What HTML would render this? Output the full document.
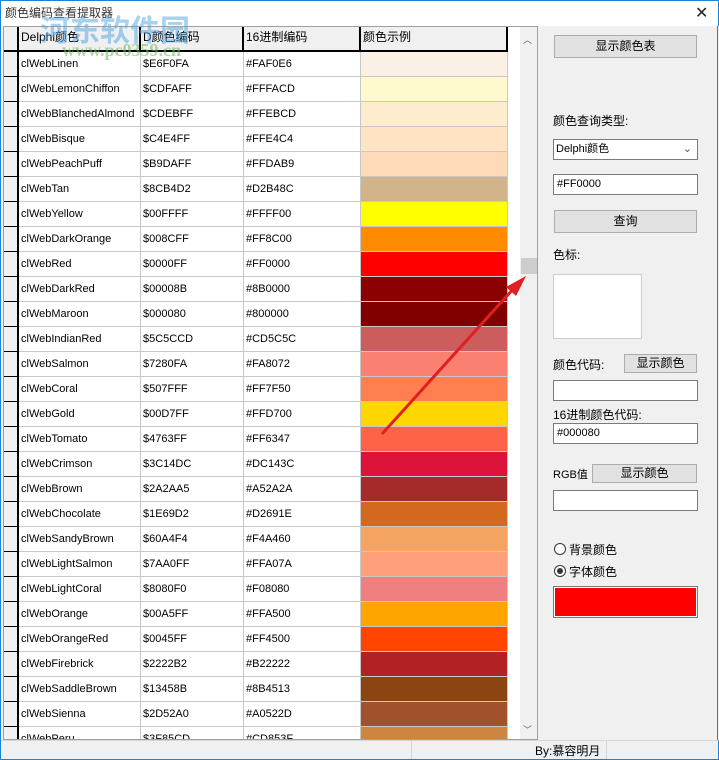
<!DOCTYPE html>
<html><head><meta charset="utf-8"><style>
*{margin:0;padding:0;box-sizing:border-box}
body{width:719px;height:760px;overflow:hidden;background:#f0f0f0;font-family:"Liberation Sans","Noto Sans CJK SC",sans-serif;font-size:11px;color:#000;position:relative}
.abs{position:absolute}
.title{left:0;top:0;width:719px;height:26px;background:#fff;border-top:1px solid #1883d7;border-left:1px solid #1883d7;border-right:1px solid #1883d7}
.grid{left:3px;top:26px;width:535px;height:714px;background:#fff;border:1px solid #a0a0a0;overflow:hidden}
.row{position:absolute;left:0;height:25px;width:504px}
.c{position:absolute;top:0;height:25px;line-height:24px;padding-left:2px;border-right:1px solid #c8c8c8;border-bottom:1px solid #c8c8c8;white-space:nowrap;overflow:hidden}
.ind{left:0;width:15px;background:#f0f0f0;border-right:2px solid #000;border-bottom:1px solid #000}
.hd .c{background:#f0f0f0;border-right:2px solid #000;border-bottom:2px solid #000;font-size:12px;line-height:20px}
.btn{position:absolute;background:#e1e1e1;border:1px solid #adadad;text-align:center;font-size:12px}
.inp{position:absolute;background:#fff;border:1px solid #7a7a7a;font-size:11px;padding-left:4px}
.lbl{position:absolute;font-size:12px}
</style></head><body>
<div class="abs title"></div>
<div class="abs" style="left:5px;top:4px;font-size:12px;color:#333">颜色编码查看提取器</div>
<div class="abs" style="left:695px;top:3px;font-size:16px;font-weight:300;color:#222">✕</div>
<div class="abs grid">
<div class="row hd" style="top:0;height:25px">
<div class="c" style="left:0;width:15px;height:25px"></div>
<div class="c" style="left:15px;width:122px;height:25px">Delphi颜色</div>
<div class="c" style="left:137px;width:103px;height:25px">D颜色编码</div>
<div class="c" style="left:240px;width:117px;height:25px">16进制编码</div>
<div class="c" style="left:357px;width:147px;height:25px">颜色示例</div>
</div>
<div id="rows"></div>
<div class="abs" style="left:516px;top:0;width:17px;height:714px;background:#f0f0f0"></div>
<div class="abs" style="left:519px;top:6px;font-size:9px;color:#606060">︿</div>
<div class="abs" style="left:519px;top:696px;font-size:9px;color:#606060">﹀</div>
<div class="abs" style="left:517px;top:231px;width:16px;height:16px;background:#cdcdcd"></div>
</div>
<div class="abs" style="left:40px;top:6px;font-size:30px;font-weight:bold;color:#4fa6e0;opacity:.5;z-index:5">河东软件园</div>
<div class="abs" style="left:62px;top:40px;font-size:18px;font-weight:bold;color:#6bb85a;opacity:.55;font-family:'Liberation Serif',serif;z-index:5">www.pc0359.cn</div>
<div class="abs" style="left:0;top:740px;width:719px;height:20px;background:#f0f0f0;border-top:1px solid #d7d7d7;border-bottom:1px solid #1883d7;border-left:1px solid #1883d7;border-right:1px solid #1883d7"></div>
<div class="abs" style="left:411px;top:741px;width:1px;height:18px;background:#d7d7d7"></div>
<div class="abs" style="left:606px;top:741px;width:1px;height:18px;background:#d7d7d7"></div>
<div class="abs" style="left:535px;top:742px;font-size:12px">By:慕容明月</div>
<div class="abs" style="left:717px;top:26px;width:1px;height:714px;background:#1883d7"></div>
<div class="abs" style="left:0;top:26px;width:1px;height:734px;background:#1883d7"></div>

<div class="btn" style="left:554px;top:35px;width:143px;height:23px;line-height:21px">显示颜色表</div>
<div class="lbl" style="left:553px;top:112px">颜色查询类型:</div>
<div class="inp" style="left:553px;top:139px;width:145px;height:21px;line-height:19px;padding-left:2px">Delphi颜色<span style="position:absolute;right:5px;top:0;color:#555">⌄</span></div>
<div class="inp" style="left:553px;top:174px;width:145px;height:21px;line-height:19px;padding-left:3px">#FF0000</div>
<div class="btn" style="left:554px;top:210px;width:143px;height:23px;line-height:21px">查询</div>
<div class="lbl" style="left:553px;top:246px">色标:</div>
<div class="abs" style="left:553px;top:274px;width:89px;height:65px;background:#fff;border:1px solid #ccc"></div>
<div class="lbl" style="left:553px;top:356px">颜色代码:</div>
<div class="btn" style="left:624px;top:354px;width:73px;height:19px;line-height:17px">显示颜色</div>
<div class="inp" style="left:553px;top:380px;width:145px;height:21px"></div>
<div class="lbl" style="left:553px;top:406px">16进制颜色代码:</div>
<div class="inp" style="left:553px;top:423px;width:145px;height:21px;line-height:19px;padding-left:3px">#000080</div>
<div class="lbl" style="left:553px;top:466px;font-size:11px">RGB值</div>
<div class="btn" style="left:592px;top:464px;width:105px;height:19px;line-height:17px">显示颜色</div>
<div class="inp" style="left:553px;top:490px;width:145px;height:21px"></div>
<div class="abs" style="left:554px;top:543px;width:12px;height:12px;border:1px solid #333;border-radius:50%;background:#fff"></div>
<div class="lbl" style="left:569px;top:541px">背景颜色</div>
<div class="abs" style="left:554px;top:565px;width:12px;height:12px;border:1px solid #333;border-radius:50%;background:#fff"><div style="margin:2px;width:6px;height:6px;border-radius:50%;background:#333"></div></div>
<div class="lbl" style="left:569px;top:563px">字体颜色</div>
<div class="abs" style="left:553px;top:586px;width:145px;height:32px;border:1px solid #7a7a7a;background:#f00;outline:1px solid #fff;outline-offset:-2px"></div>

<svg class="abs" style="left:0;top:0" width="719" height="760"><line x1="382" y1="434" x2="515" y2="287" stroke="#e02020" stroke-width="3"/><polygon points="526,276 506,287 516,296" fill="#e02020"/></svg>

<script>
var d=[["clWebLinen","$E6F0FA","#FAF0E6"],["clWebLemonChiffon","$CDFAFF","#FFFACD"],["clWebBlanchedAlmond","$CDEBFF","#FFEBCD"],["clWebBisque","$C4E4FF","#FFE4C4"],["clWebPeachPuff","$B9DAFF","#FFDAB9"],["clWebTan","$8CB4D2","#D2B48C"],["clWebYellow","$00FFFF","#FFFF00"],["clWebDarkOrange","$008CFF","#FF8C00"],["clWebRed","$0000FF","#FF0000"],["clWebDarkRed","$00008B","#8B0000"],["clWebMaroon","$000080","#800000"],["clWebIndianRed","$5C5CCD","#CD5C5C"],["clWebSalmon","$7280FA","#FA8072"],["clWebCoral","$507FFF","#FF7F50"],["clWebGold","$00D7FF","#FFD700"],["clWebTomato","$4763FF","#FF6347"],["clWebCrimson","$3C14DC","#DC143C"],["clWebBrown","$2A2AA5","#A52A2A"],["clWebChocolate","$1E69D2","#D2691E"],["clWebSandyBrown","$60A4F4","#F4A460"],["clWebLightSalmon","$7AA0FF","#FFA07A"],["clWebLightCoral","$8080F0","#F08080"],["clWebOrange","$00A5FF","#FFA500"],["clWebOrangeRed","$0045FF","#FF4500"],["clWebFirebrick","$2222B2","#B22222"],["clWebSaddleBrown","$13458B","#8B4513"],["clWebSienna","$2D52A0","#A0522D"],["clWebPeru","$3F85CD","#CD853F"]];
var h="";d.forEach(function(r,i){h+='<div class="row" style="top:'+(25+i*25)+'px"><div class="c ind"></div><div class="c" style="left:15px;width:122px">'+r[0]+'</div><div class="c" style="left:137px;width:103px">'+r[1]+'</div><div class="c" style="left:240px;width:117px">'+r[2]+'</div><div class="c" style="left:357px;width:147px;background:'+r[2]+'"></div></div>'});
document.getElementById("rows").innerHTML=h;
</script>
</body></html>
